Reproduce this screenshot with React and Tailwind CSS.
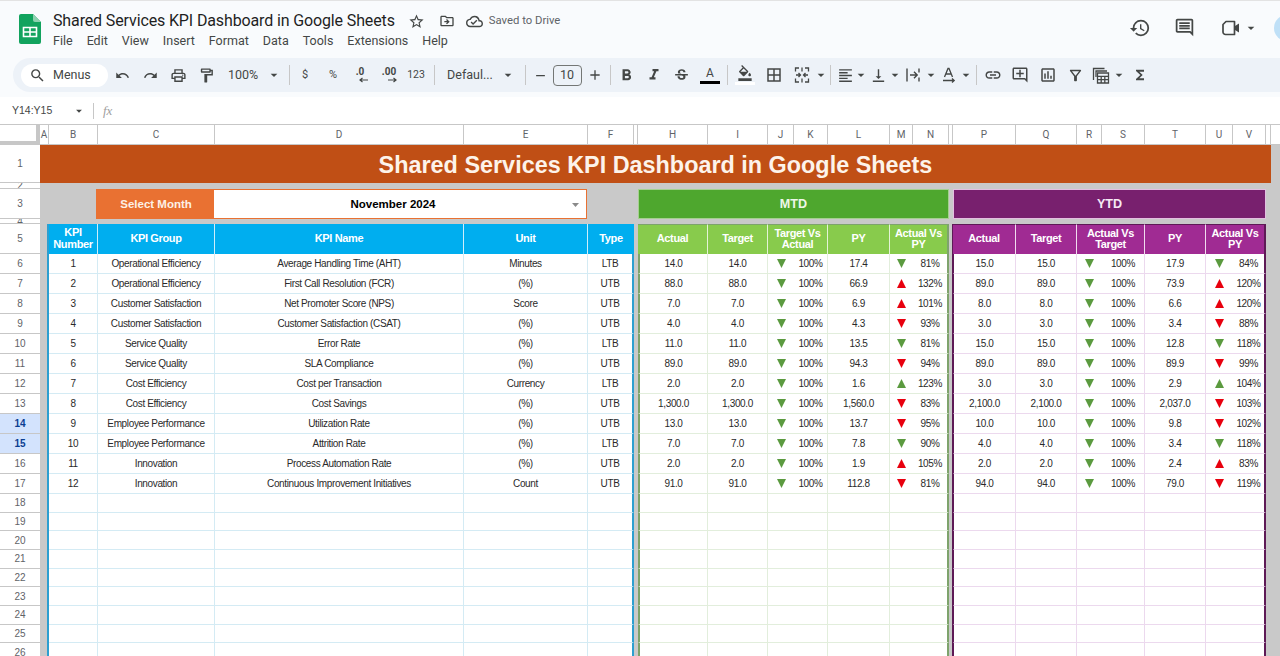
import React from "react";
import {
  MdSearch, MdUndo, MdRedo, MdOutlineLocalPrintshop, MdOutlineFormatPaint, MdArrowDropDown,
  MdRemove, MdAdd, MdFormatBold, MdFormatItalic, MdStrikethroughS, MdOutlineFormatColorFill,
  MdBorderAll, MdFormatAlignLeft, MdVerticalAlignBottom, MdLink, MdOutlineAddComment,
  MdOutlineFilterAlt, MdFunctions, MdHistory, MdOutlineMessage,
  MdStarBorder, MdOutlineDriveFileMove, MdOutlineCloudDone, MdOutlineInsertChart,
} from "react-icons/md";

const ICON = "#444746";
const S = ({ c, children }) => (
  <div className={`flex h-full shrink-0 items-center justify-center whitespace-nowrap ${c}`}>{children}</div>
);
const Sep = ({ c }) => (
  <div className={`flex h-full shrink-0 items-center justify-center ${c}`}>
    <div className="h-[20px] w-px bg-[#c7c7c7]" />
  </div>
);
const Caret = () => <MdArrowDropDown size={16} color={ICON} className="shrink-0" />;

const Logo = () => (
  <svg width="22" height="30" viewBox="0 0 22 30" className="mt-[13px] shrink-0">
    <path d="M2 0H14L22 8V28a2 2 0 0 1-2 2H2a2 2 0 0 1-2-2V2a2 2 0 0 1 2-2z" fill="#12a35e" />
    <path d="M14 0L22 8H16a2 2 0 0 1-2-2z" fill="#8ed1b0" />
    <path d="M4.5 13.5h13v9h-13zM11 13.5v9M4.5 18h13" fill="none" stroke="#fff" strokeWidth="1.6" />
  </svg>
);

const VideoIcon = () => (
  <svg width="20" height="18" viewBox="0 0 20 18" fill="none" className="ml-[26px] shrink-0">
    <path d="M5 2.5h8.5v13H4.5A2.5 2.5 0 0 1 2 13V5.5z" stroke={ICON} strokeWidth="1.7" strokeLinejoin="round" />
    <path d="M14 7l4-2.5v9L14 11z" fill={ICON} />
  </svg>
);
const MergeIcon = () => (
  <svg width="18" height="18" viewBox="0 0 18 18" fill="none" stroke={ICON} strokeWidth="1.3" className="shrink-0">
    <path d="M6 2H2.5v3.5M12 2h3.5v3.5M6 16H2.5v-3.5M12 16h3.5v-3.5M9 1.5v4M9 12.5v4" />
    <path d="M3 9h4M5.5 7l2 2-2 2M15 9h-4M12.5 7l-2 2 2 2" />
  </svg>
);
const WrapIcon = () => (
  <svg width="18" height="18" viewBox="0 0 18 18" fill="none" stroke={ICON} strokeWidth="1.4" className="shrink-0">
    <path d="M3 2.5v13M15 2.5v4M15 11.5v4M6 9h7M10 5.8L13.2 9 10 12.2" />
  </svg>
);
const RotateIcon = () => (
  <svg width="18" height="18" viewBox="0 0 18 18" fill="none" stroke={ICON} strokeWidth="1.3" className="shrink-0">
    <path d="M4.5 11L8 2.5h1L12.5 11M6 8h5M3 14.5h11M12 12.5l2.2 2-2.2 2" />
  </svg>
);
const TableCalc = () => (
  <svg width="20" height="20" viewBox="0 0 20 20" fill="none" stroke={ICON} strokeWidth="1.3" className="shrink-0">
    <path d="M2.5 15V3.5h11M5 12V6h11" />
    <path d="M6.5 8h11v10h-11zM6.5 11.3h11M6.5 14.6h11M10.2 11.3V18M13.8 11.3V18" />
  </svg>
);
const TextColor = () => (
  <div className="flex flex-col items-center">
    <span className="font-['Roboto',sans-serif] text-[12px] leading-[13px] text-[#444746]">A</span>
    <div className="mt-[1px] h-[3px] w-[20px] bg-black" />
  </div>
);
const FillColor = () => (
  <div className="flex flex-col items-center">
    <MdOutlineFormatColorFill size={16} color={ICON} className="shrink-0" />
    <div className="mt-[1px] h-[3px] w-[20px] bg-white" />
  </div>
);
const Dec = ({ t, flip }) => (
  <div className="flex flex-col items-center font-['Roboto',sans-serif] text-[#444746]">
    <span className="text-[10px] font-bold leading-[10px]">{t}</span>
    <svg width="10" height="6" viewBox="0 0 10 6" fill="none" stroke={ICON} strokeWidth="1.2" className={flip ? "ml-[6px]" : "ml-[8px]"}>
      {flip ? <path d="M1 3h8M6.5 1L9 3 6.5 5" /> : <path d="M9 3H1M3.5 1L1 3l2.5 2" />}
    </svg>
  </div>
);

const Chrome = () => (
  <div className="bg-[#f9fbfd] font-['Roboto',sans-serif] text-[#444746]">
    <div className="h-px bg-[#e3e3e3]" />
    <div className="flex h-[57px] items-start pl-[19px]">
      <Logo />
      <div className="ml-[12px] flex flex-col pt-[10px]">
        <div className="flex h-[20px] items-center">
          <span className="text-[16px] leading-[20px] tracking-[-0.13px] text-[#1f1f1f]">Shared Services KPI Dashboard in Google Sheets</span>
          <MdStarBorder size={17} color={ICON} className="ml-[13px]" />
          <MdOutlineDriveFileMove size={16} color={ICON} className="ml-[14px]" />
          <MdOutlineCloudDone size={17} color={ICON} className="ml-[11px]" />
          <span className="ml-[6px] text-[11.3px] text-[#5f6368]">Saved to Drive</span>
        </div>
        <div className="mt-[1px] flex gap-[14px] text-[12.5px] leading-[18px] text-[#444746]">
          {["File", "Edit", "View", "Insert", "Format", "Data", "Tools", "Extensions", "Help"].map((m) => (
            <span key={m}>{m}</span>
          ))}
        </div>
      </div>
      <div className="ml-auto flex h-full items-center pb-[4px]">
        <MdHistory size={22} color={ICON} />
        <MdOutlineMessage size={21} color={ICON} className="ml-[23px] -scale-x-100" />
        <VideoIcon />
        <MdArrowDropDown size={16} color={ICON} className="ml-[2px]" />
        <div className="-mr-[20px] ml-[15px] h-[26px] w-[26px] rounded-full bg-[#bfe0f7]" />
      </div>
    </div>
    <div className="ml-[13px] flex h-[34px] items-center overflow-hidden rounded-l-full bg-[#edf2f8] text-[12.5px]">
      <div className="ml-[8px] flex h-[23px] w-[87px] shrink-0 items-center rounded-full bg-white pl-[8px]">
        <MdSearch size={17} color={ICON} />
        <span className="ml-[7px] text-[12.5px]">Menus</span>
      </div>
      <S c="w-[28px]"><MdUndo size={15} color={ICON} /></S>
      <S c="w-[28px]"><MdRedo size={15} color={ICON} /></S>
      <S c="w-[28px]"><MdOutlineLocalPrintshop size={17} color={ICON} /></S>
      <S c="w-[28px]"><MdOutlineFormatPaint size={17} color={ICON} /></S>
      <S c="w-[46px]">100%</S>
      <S c="w-[16px]"><Caret /></S>
      <Sep c="w-[14px]" />
      <S c="w-[18px] text-[11px]">$</S>
      <S c="w-[38px] text-[11px]">%</S>
      <S c="w-[16px]"><Dec t=".0" /></S>
      <S c="w-[42px]"><Dec t=".00" flip /></S>
      <S c="w-[12px] text-[10.5px]">123</S>
      <Sep c="w-[24px]" />
      <S c="w-[48px]">Defaul...</S>
      <S c="w-[28px]"><Caret /></S>
      <Sep c="w-[6px]" />
      <S c="w-[24px]"><MdRemove size={15} color={ICON} /></S>
      <S c="w-[30px]"><div className="flex h-[21px] w-[29px] items-center justify-center rounded-[4px] border border-[#747775] text-[12.5px]">10</div></S>
      <S c="w-[26px]"><MdAdd size={16} color={ICON} /></S>
      <Sep c="w-[4px]" />
      <S c="w-[28px]"><MdFormatBold size={19} color={ICON} /></S>
      <S c="w-[28px]"><MdFormatItalic size={18} color={ICON} /></S>
      <S c="w-[26px]"><MdStrikethroughS size={17} color={ICON} /></S>
      <S c="w-[32px]"><TextColor /></S>
      <Sep c="w-[2px]" />
      <S c="w-[34px]"><FillColor /></S>
      <S c="w-[24px]"><MdBorderAll size={18} color={ICON} /></S>
      <S c="w-[32px]"><MergeIcon /></S>
      <S c="w-[6px]"><Caret /></S>
      <Sep c="w-[12px]" />
      <S c="w-[18px]"><MdFormatAlignLeft size={17} color={ICON} /></S>
      <S c="w-[14px]"><Caret /></S>
      <S c="w-[20px]"><MdVerticalAlignBottom size={17} color={ICON} /></S>
      <S c="w-[14px]"><Caret /></S>
      <S c="w-[22px]"><WrapIcon /></S>
      <S c="w-[14px]"><Caret /></S>
      <S c="w-[22px]"><RotateIcon /></S>
      <S c="w-[12px]"><Caret /></S>
      <Sep c="w-[8px]" />
      <S c="w-[26px]"><MdLink size={18} color={ICON} /></S>
      <S c="w-[28px]"><MdOutlineAddComment size={18} color={ICON} /></S>
      <S c="w-[28px]"><MdOutlineInsertChart size={18} color={ICON} /></S>
      <S c="w-[26px]"><MdOutlineFilterAlt size={17} color={ICON} /></S>
      <S c="w-[26px]"><TableCalc /></S>
      <S c="w-[10px]"><Caret /></S>
      <S c="w-[32px]"><MdFunctions size={16} color={ICON} /></S>
    </div>
    <div className="h-[5px]" />
    <div className="flex h-[27px] items-center bg-white text-[#444746]">
      <span className="ml-[12px] w-[60px] font-['Liberation_Sans',sans-serif] text-[10.5px]">Y14:Y15</span>
      <MdArrowDropDown size={14} color={ICON} />
      <div className="ml-[7px] h-[16px] w-px bg-[#c7c7c7]" />
      <span className="ml-[9px] font-['Liberation_Serif',serif] text-[13px] italic text-[#a0a0a0]">fx</span>
    </div>
  </div>
);

const kpi = [
  ["Operational Efficiency", "Average Handling Time (AHT)", "Minutes", "LTB"],
  ["Operational Efficiency", "First Call Resolution (FCR)", "(%)", "UTB"],
  ["Customer Satisfaction", "Net Promoter Score (NPS)", "Score", "UTB"],
  ["Customer Satisfaction", "Customer Satisfaction (CSAT)", "(%)", "UTB"],
  ["Service Quality", "Error Rate", "(%)", "LTB"],
  ["Service Quality", "SLA Compliance", "(%)", "UTB"],
  ["Cost Efficiency", "Cost per Transaction", "Currency", "LTB"],
  ["Cost Efficiency", "Cost Savings", "(%)", "UTB"],
  ["Employee Performance", "Utilization Rate", "(%)", "UTB"],
  ["Employee Performance", "Attrition Rate", "(%)", "LTB"],
  ["Innovation", "Process Automation Rate", "(%)", "UTB"],
  ["Innovation", "Continuous Improvement Initiatives", "Count", "UTB"],
];
// actual, py, arrow, pct  (arrow: g = green down, r = red down, u = red up, p = green up)
const mtd = [
  ["14.0", "17.4", "g", "81%"], ["88.0", "66.9", "u", "132%"], ["7.0", "6.9", "u", "101%"],
  ["4.0", "4.3", "r", "93%"], ["11.0", "13.5", "g", "81%"], ["89.0", "94.3", "r", "94%"],
  ["2.0", "1.6", "p", "123%"], ["1,300.0", "1,560.0", "r", "83%"], ["13.0", "13.7", "r", "95%"],
  ["7.0", "7.8", "g", "90%"], ["2.0", "1.9", "u", "105%"], ["91.0", "112.8", "r", "81%"],
];
const ytd = [
  ["15.0", "17.9", "g", "84%"], ["89.0", "73.9", "u", "120%"], ["8.0", "6.6", "u", "120%"],
  ["3.0", "3.4", "r", "88%"], ["15.0", "12.8", "g", "118%"], ["89.0", "89.9", "r", "99%"],
  ["3.0", "2.9", "p", "104%"], ["2,100.0", "2,037.0", "r", "103%"], ["10.0", "9.8", "r", "102%"],
  ["4.0", "3.4", "g", "118%"], ["2.0", "2.4", "u", "83%"], ["94.0", "79.0", "r", "119%"],
];

const Tri = ({ k }) => {
  const fill = k === "g" || k === "p" ? "#5b9a3f" : "#e8000e";
  const pts = k === "u" || k === "p" ? "4.5,0 9,9 0,9" : "0,0 9,0 4.5,9";
  return (
    <svg width="9" height="9" viewBox="0 0 9 9" className="-mt-[1px] shrink-0">
      <polygon points={pts} fill={fill} />
    </svg>
  );
};

const letters = ["A", "B", "C", "D", "E", "F", "", "H", "I", "J", "K", "L", "M", "N", "", "P", "Q", "R", "S", "T", "U", "V", ""];
const C = "flex items-center justify-center overflow-hidden whitespace-nowrap min-w-0 bg-white text-[10px] tracking-[-0.36px] text-[#2a2a2a]";
const BL = `${C} border-b border-r border-b-[#d4ebf4] border-r-[#d4ebf4]`;
const GR = `${C} border-b border-r border-b-[#e2eedc] border-r-[#e2eedc]`;
const GN = `${C} border-b border-b-[#e2eedc]`;
const PU = `${C} border-b border-r border-b-[#ecd9ee] border-r-[#ecd9ee]`;
const PN = `${C} border-b border-b-[#ecd9ee]`;
const H = "flex items-center justify-center overflow-hidden pb-px text-center text-[11px] font-bold leading-[11.5px] tracking-[-0.35px] text-white min-w-0";
const HB = `${H} bg-[#00aeef] border-r border-r-[#cfeefb]`;
const HG = `${H} bg-[#88cb4c] border-r border-r-[#e4f3d6] border-t border-t-[#7ea36c]`;
const HP = `${H} bg-[#a02b93] border-r border-r-[#f1dcef] border-t border-t-[#5e1a56]`;
const Gap = "bg-[#c9c9c9]";

const RowNum = ({ n, sel }) => (
  <div
    className={
      sel
        ? "flex items-center justify-center overflow-hidden border-b border-b-[#c7c7c7] bg-[#d3e3fd] text-[10px] font-bold text-[#0b3d91]"
        : "flex items-center justify-center overflow-hidden border-b border-b-[#c7c7c7] bg-white text-[10px] text-[#5f6368]"
    }
  >
    {n}
  </div>
);

const Row = ({ n, i }) => {
  const k = i == null ? null : kpi[i];
  const m = i == null ? null : mtd[i];
  const y = i == null ? null : ytd[i];
  return (
    <>
      <RowNum n={n} sel={n === 14 || n === 15} />
      <div className="border-r-2 border-r-[#2d9fd0] bg-[#c9c9c9]" />
      <div className={BL}>{k && i + 1}</div>
      <div className={BL}>{k && k[0]}</div>
      <div className={BL}>{k && k[1]}</div>
      <div className={BL}>{k && k[2]}</div>
      <div className={`${C} border-b border-b-[#d4ebf4] border-r-2 border-r-[#2d9fd0]`}>{k && k[3]}</div>
      <div className={Gap} />
      <div className={`${GR} border-l-2 border-l-[#7ea36c]`}>{m && m[0]}</div>
      <div className={GR}>{m && m[0]}</div>
      <div className={GN}>{m && <Tri k="g" />}</div>
      <div className={GR}>{m && "100%"}</div>
      <div className={GR}>{m && m[1]}</div>
      <div className={GN}>{m && <Tri k={m[2]} />}</div>
      <div className={`${C} border-b border-b-[#e2eedc] border-r-2 border-r-[#7ea36c]`}>{m && m[3]}</div>
      <div className="border-r border-r-[#5e1a56] bg-[#c9c9c9]" />
      <div className={`${PU} border-l border-l-[#5e1a56]`}>{y && y[0]}</div>
      <div className={PU}>{y && y[0]}</div>
      <div className={PN}>{y && <Tri k="g" />}</div>
      <div className={PU}>{y && "100%"}</div>
      <div className={PU}>{y && y[1]}</div>
      <div className={PN}>{y && <Tri k={y[2]} />}</div>
      <div className={`${C} border-b border-b-[#ecd9ee] border-r-2 border-r-[#5e1a56]`}>{y && y[3]}</div>
      <div className={`${Gap} col-span-2`} />
    </>
  );
};

const Sheet = () => (
  <div className="grid grid-cols-[40px_9px_49px_117px_249px_124px_46px_4px_70px_60px_26px_34px_62px_23px_36px_4px_63px_61px_25px_43px_61px_27px_33px_5px_9px] grid-rows-[21px_38px_6px_30px_5px_30px_repeat(12,20px)_repeat(9,18.67px)] bg-[#c9c9c9] font-['Liberation_Sans',Arial,sans-serif]">
    <div className="border-b-4 border-r-4 border-t border-[#c7c7c7] bg-white" />
    {letters.map((l, i) => (
      <div key={i} className="flex items-center justify-center border-b border-r border-t border-[#c7c7c7] bg-white font-['Roboto',sans-serif] text-[10px] text-[#5f6368]">
        {l}
      </div>
    ))}
    <div className="border-b border-t border-[#c7c7c7] bg-white" />

    <RowNum n={1} />
    <div className="col-span-23 flex items-center justify-center bg-[#c04f15] pt-[3px] text-[23.4px] font-bold text-[#fdf3ea]">
      Shared Services KPI Dashboard in Google Sheets
    </div>
    <div className={Gap} />

    <RowNum n={2} />
    <div className={`${Gap} col-span-24`} />

    <RowNum n={3} />
    <div className={`${Gap} col-span-2`} />
    <div className="-ml-[2px] -mr-px flex items-center justify-center bg-[#e97132] pt-px text-[11.5px] font-bold text-[#fdf0e6]">Select Month</div>
    <div className="col-span-2 -ml-px mr-px flex items-center border-[1.5px] border-l-0 border-[#e97132] bg-white pt-px text-[11.5px] font-bold text-black">
      <span className="flex-1 text-center">November 2024</span>
      <svg width="7" height="4" viewBox="0 0 7 4" className="mr-[5px] shrink-0"><polygon points="0,0 7,0 3.5,4" fill="#8a8a8a" /></svg>
      <span className="w-[2px]" />
    </div>
    <div className={`${Gap} col-span-2`} />
    <div className="col-span-7 flex items-center justify-center border border-[#a5d08f] bg-[#4ea72e] text-[12.6px] font-bold text-[#eef7e8]">MTD</div>
    <div className={Gap} />
    <div className="col-span-7 flex items-center justify-center border border-[#e3bfe0] bg-[#78206e] text-[12.6px] font-bold text-[#f6e9f4]">YTD</div>
    <div className={`${Gap} col-span-2`} />

    <RowNum n={4} />
    <div className={`${Gap} col-span-24`} />

    <RowNum n={5} />
    <div className="border-r-2 border-r-[#2d9fd0] bg-[#c9c9c9]" />
    <div className={HB}>KPI Number</div>
    <div className={HB}>KPI Group</div>
    <div className={HB}>KPI Name</div>
    <div className={HB}>Unit</div>
    <div className={`${H} bg-[#00aeef]`}>Type</div>
    <div className={Gap} />
    <div className={HG}>Actual</div>
    <div className={HG}>Target</div>
    <div className={`${HG} col-span-2`}>Target Vs Actual</div>
    <div className={HG}>PY</div>
    <div className={`${H} col-span-2 border-r-2 border-t border-r-[#7ea36c] border-t-[#7ea36c] bg-[#88cb4c]`}>Actual Vs PY</div>
    <div className="border-r border-r-[#5e1a56] bg-[#c9c9c9]" />
    <div className={HP}>Actual</div>
    <div className={HP}>Target</div>
    <div className={`${HP} col-span-2`}>Actual Vs Target</div>
    <div className={HP}>PY</div>
    <div className={`${H} col-span-2 border-r-2 border-t border-r-[#5e1a56] border-t-[#5e1a56] bg-[#a02b93]`}>Actual Vs PY</div>
    <div className={`${Gap} col-span-2`} />

    {kpi.map((_, i) => <Row key={i} n={i + 6} i={i} />)}
    {[18, 19, 20, 21, 22, 23, 24, 25, 26].map((n) => <Row key={n} n={n} />)}
  </div>
);

export default function App() {
  return (
    <div className="h-[656px] w-[1280px] overflow-hidden bg-white">
      <Chrome />
      <Sheet />
    </div>
  );
}
